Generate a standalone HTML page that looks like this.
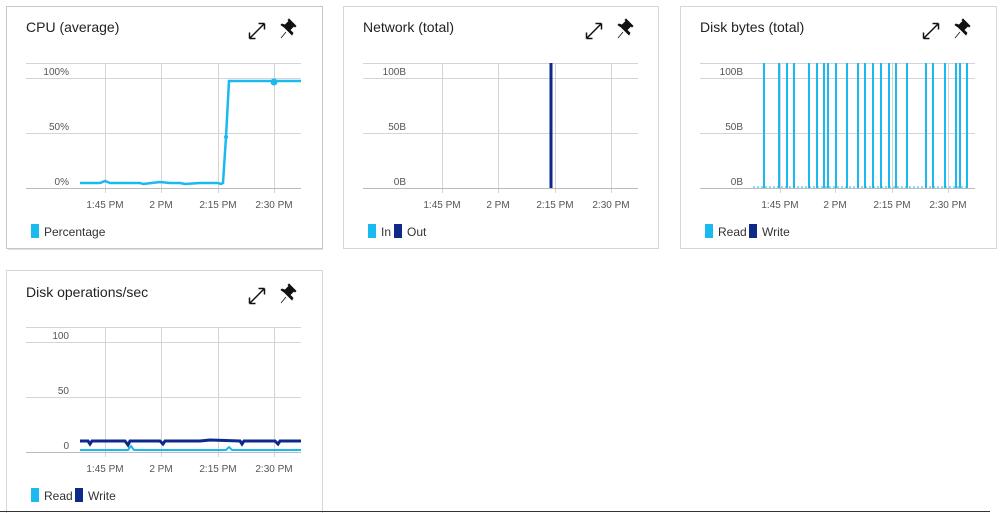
<!DOCTYPE html><html><head><style>
body{margin:0;width:1000px;height:513px;background:#fff;overflow:hidden;font-family:"Liberation Sans",sans-serif}
svg{position:absolute;left:0;top:0}
text{font-family:"Liberation Sans",sans-serif}
.t{font-size:14px;fill:#222}
.ax{font-size:10px;fill:#555}
.lg{font-size:12px;fill:#333}
.g{stroke:#d4d4d4;stroke-width:1}
</style></head><body>
<svg width="1000" height="513" viewBox="0 0 1000 513">
<defs>
<g id="icons">
<path d="M249.5 38.5 L264.5 23.5 M249.5 38.5 L249.5 32.5 M249.5 38.5 L255.5 38.5 M264.5 23.5 L258.5 23.5 M264.5 23.5 L264.5 29.5" stroke="#111" stroke-width="1.5" fill="none"/>
<path d="M281 38 L286 32 M284 27 L292 35 L293 33 L290 30 L294 26 L295 27 L296 26 L289 19 L288 20 L289 21 L285 25 L282 24 L281 25 Z" fill="#111" stroke="#111" stroke-width="0.8"/>
</g>
</defs>
<!-- card shadows/borders -->
<rect x="6.5" y="6.5" width="316" height="242" fill="#fff" stroke="#c8c8c8"/>
<line x1="8" y1="249.5" x2="323" y2="249.5" stroke="#e0e0e0"/>
<rect x="343.5" y="6.5" width="315" height="242" fill="#fff" stroke="#d6d6d6"/>
<rect x="680.5" y="6.5" width="316" height="242" fill="#fff" stroke="#d6d6d6"/>
<rect x="6.5" y="270.5" width="316" height="250" fill="#fff" stroke="#d6d6d6"/>
<line x1="0" y1="511.5" x2="990" y2="511.5" stroke="#333"/>

<!-- CPU -->
<text x="26" y="32" class="t">CPU (average)</text>
<use href="#icons"/>
<g class="g"><line x1="26" y1="63.5" x2="301" y2="63.5"/><line x1="26" y1="78.5" x2="301" y2="78.5"/><line x1="26" y1="133.5" x2="301" y2="133.5"/>
<line x1="105.5" y1="63" x2="105.5" y2="193"/><line x1="161.5" y1="63" x2="161.5" y2="193"/><line x1="218.5" y1="63" x2="218.5" y2="193"/><line x1="274.5" y1="63" x2="274.5" y2="193"/></g>
<line x1="26" y1="188.5" x2="301" y2="188.5" stroke="#bbb"/>
<text x="69" y="75" class="ax" text-anchor="end">100%</text><text x="69" y="130" class="ax" text-anchor="end">50%</text><text x="69" y="185" class="ax" text-anchor="end">0%</text>
<g class="ax" text-anchor="middle"><text x="105" y="208">1:45 PM</text><text x="161" y="208">2 PM</text><text x="218" y="208">2:15 PM</text><text x="274" y="208">2:30 PM</text></g>
<polyline points="80,183 100,183 105,181 110,183 140,183 143,184 160,182 170,183 180,183 185,184 200,183 218,183 221,184 223,183 226,137 229,81 260,81 274,81 301,81" fill="none" stroke="#1ab9ef" stroke-width="2.5"/>
<circle cx="274" cy="82" r="3.5" fill="#1ab9ef"/><circle cx="226" cy="137" r="2" fill="#1ab9ef"/>
<rect x="31" y="224" width="8" height="14" fill="#1ab9ef"/><text x="44" y="236" class="lg">Percentage</text>

<!-- Network -->
<text x="363" y="32" class="t">Network (total)</text>
<use href="#icons" transform="translate(337,0)"/>
<g class="g"><line x1="363" y1="63.5" x2="638" y2="63.5"/><line x1="363" y1="78.5" x2="638" y2="78.5"/><line x1="363" y1="133.5" x2="638" y2="133.5"/>
<line x1="442.5" y1="63" x2="442.5" y2="193"/><line x1="498.5" y1="63" x2="498.5" y2="193"/><line x1="555.5" y1="63" x2="555.5" y2="193"/><line x1="611.5" y1="63" x2="611.5" y2="193"/></g>
<line x1="363" y1="188.5" x2="638" y2="188.5" stroke="#bbb"/>
<text x="406" y="75" class="ax" text-anchor="end">100B</text><text x="406" y="130" class="ax" text-anchor="end">50B</text><text x="406" y="185" class="ax" text-anchor="end">0B</text>
<g class="ax" text-anchor="middle"><text x="442" y="208">1:45 PM</text><text x="498" y="208">2 PM</text><text x="555" y="208">2:15 PM</text><text x="611" y="208">2:30 PM</text></g>
<rect x="549.5" y="63" width="3" height="125" fill="#0d2a8a"/>
<rect x="368" y="224" width="8" height="14" fill="#1ab9ef"/><text x="381" y="236" class="lg">In</text>
<rect x="394" y="224" width="8" height="14" fill="#0d2a8a"/><text x="407" y="236" class="lg">Out</text>

<!-- Disk bytes -->
<text x="700" y="32" class="t">Disk bytes (total)</text>
<use href="#icons" transform="translate(674,0)"/>
<g class="g"><line x1="700" y1="63.5" x2="975" y2="63.5"/><line x1="700" y1="78.5" x2="975" y2="78.5"/><line x1="700" y1="133.5" x2="975" y2="133.5"/>
<line x1="780.5" y1="63" x2="780.5" y2="193"/><line x1="835.5" y1="63" x2="835.5" y2="193"/><line x1="892.5" y1="63" x2="892.5" y2="193"/><line x1="948.5" y1="63" x2="948.5" y2="193"/></g>
<line x1="700" y1="188.5" x2="975" y2="188.5" stroke="#bbb"/>
<text x="743" y="75" class="ax" text-anchor="end">100B</text><text x="743" y="130" class="ax" text-anchor="end">50B</text><text x="743" y="185" class="ax" text-anchor="end">0B</text>
<g class="ax" text-anchor="middle"><text x="780" y="208">1:45 PM</text><text x="835" y="208">2 PM</text><text x="892" y="208">2:15 PM</text><text x="948" y="208">2:30 PM</text></g>
<line x1="753" y1="187" x2="968" y2="187" stroke="#1ab9ef" stroke-width="1" stroke-dasharray="2,2"/>
<g fill="#1ab9ef">
<rect x="763" y="63" width="2" height="125"/><rect x="778" y="63" width="2" height="125"/><rect x="786" y="63" width="2" height="125"/><rect x="793" y="63" width="2" height="125"/><rect x="808" y="63" width="2" height="125"/><rect x="816" y="63" width="2" height="125"/><rect x="823" y="63" width="2" height="125"/><rect x="827" y="63" width="2" height="125"/><rect x="835" y="63" width="2" height="125"/><rect x="846" y="63" width="2" height="125"/><rect x="857" y="63" width="2" height="125"/><rect x="864" y="63" width="2" height="125"/><rect x="872" y="63" width="2" height="125"/><rect x="880" y="63" width="2" height="125"/><rect x="888" y="63" width="2" height="125"/><rect x="895" y="63" width="2" height="125"/><rect x="906" y="63" width="2" height="125"/><rect x="925" y="63" width="2" height="125"/><rect x="932" y="63" width="2" height="125"/><rect x="944" y="63" width="2" height="125"/><rect x="955" y="63" width="2" height="125"/><rect x="959" y="63" width="2" height="125"/><rect x="966" y="63" width="2" height="125"/>
</g>
<rect x="705" y="224" width="8" height="14" fill="#1ab9ef"/><text x="718" y="236" class="lg">Read</text>
<rect x="749" y="224" width="8" height="14" fill="#0d2a8a"/><text x="762" y="236" class="lg">Write</text>

<!-- Disk ops -->
<text x="26" y="297" class="t">Disk operations/sec</text>
<use href="#icons" transform="translate(0,265)"/>
<g class="g"><line x1="26" y1="327.5" x2="301" y2="327.5"/><line x1="26" y1="342.5" x2="301" y2="342.5"/><line x1="26" y1="397.5" x2="301" y2="397.5"/>
<line x1="105.5" y1="327" x2="105.5" y2="457"/><line x1="161.5" y1="327" x2="161.5" y2="457"/><line x1="218.5" y1="327" x2="218.5" y2="457"/><line x1="274.5" y1="327" x2="274.5" y2="457"/></g>
<line x1="26" y1="452.5" x2="301" y2="452.5" stroke="#bbb"/>
<text x="69" y="339" class="ax" text-anchor="end">100</text><text x="69" y="394" class="ax" text-anchor="end">50</text><text x="69" y="449" class="ax" text-anchor="end">0</text>
<g class="ax" text-anchor="middle"><text x="105" y="472">1:45 PM</text><text x="161" y="472">2 PM</text><text x="218" y="472">2:15 PM</text><text x="274" y="472">2:30 PM</text></g>
<polyline points="80,450 128,450 131,446 134,450 226,450 229,447 232,450 301,450" fill="none" stroke="#1ab9ef" stroke-width="2"/>
<polyline points="80,441 88,441 90,444 92,441 125,441 128,445 130,441 160,441 163,444 165,441 200,441 210,440 240,441 242,444 244,441 275,441 278,444 280,441 301,441" fill="none" stroke="#0d2a8a" stroke-width="3"/>
<rect x="31" y="488" width="8" height="14" fill="#1ab9ef"/><text x="44" y="500" class="lg">Read</text>
<rect x="75" y="488" width="8" height="14" fill="#0d2a8a"/><text x="88" y="500" class="lg">Write</text>
</svg>
</body></html>
